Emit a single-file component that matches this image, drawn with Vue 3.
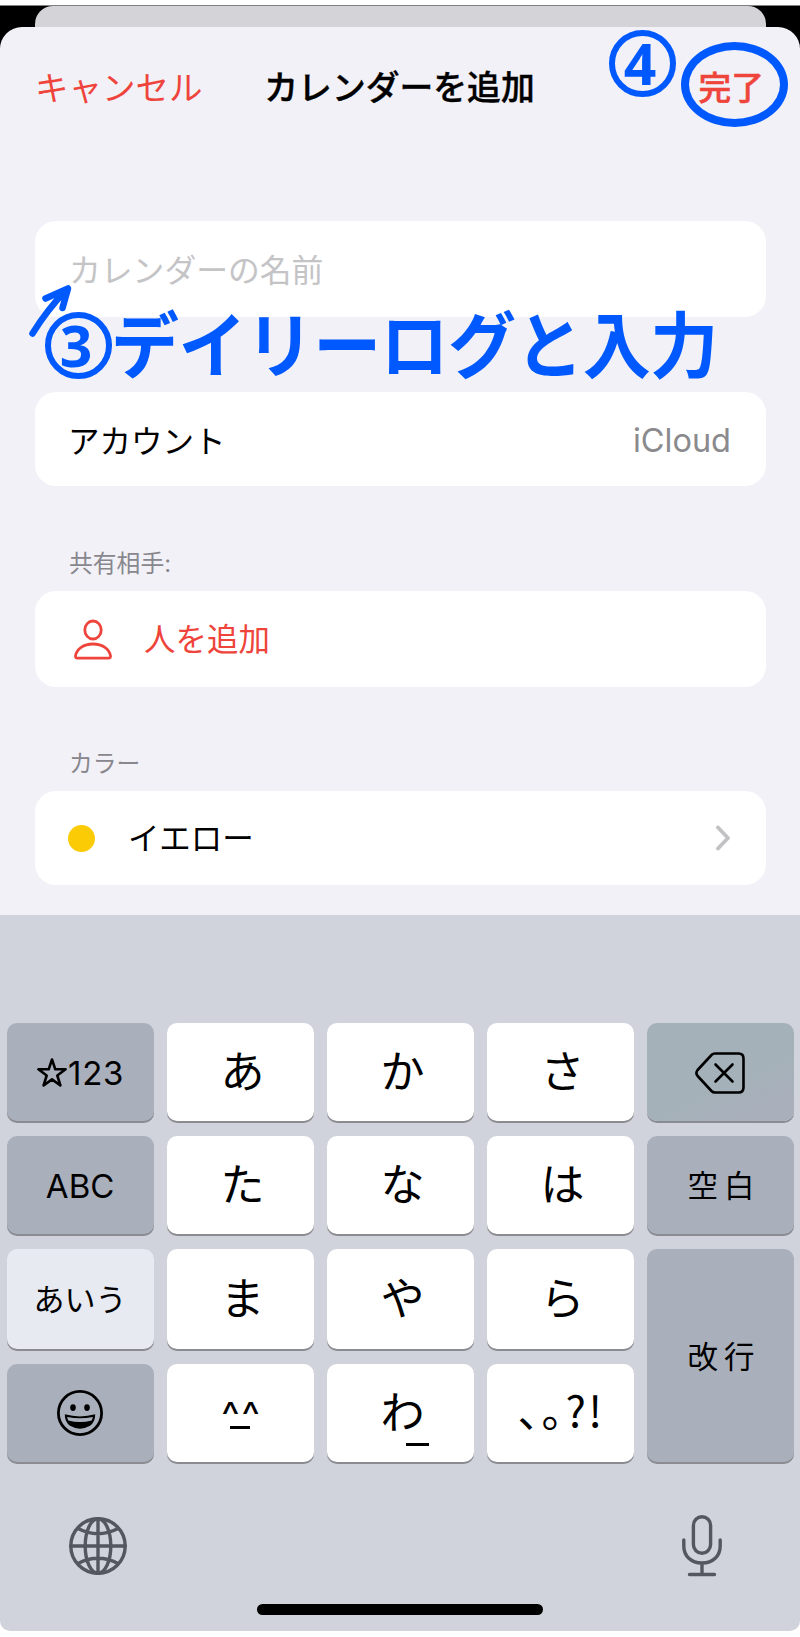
<template>
  <div class="screen">
    <div class="back-sheet"></div>

    <div class="sheet">
      <div class="nav">
        <button class="nav-btn">キャンセル</button>
        <h1>カレンダーを追加</h1>
        <button class="nav-btn done">完了</button>
      </div>

      <div class="form">
        <div class="card name-card">
          <input v-model="name" class="name-input" placeholder="カレンダーの名前">
        </div>

        <div class="card account-card">
          <span>アカウント</span>
          <span class="value">iCloud</span>
        </div>

        <div class="label">共有相手:</div>
        <div class="card share-card">
          <svg class="person" width="40" height="42" viewBox="0 0 40 42">
            <ellipse cx="20" cy="11" rx="8.2" ry="9" />
            <path d="M4.5 39.2h31c1.4 0 2.2-.9 2-2.3C36.4 30 29.5 25 20 25S3.6 30 2.5 36.9c-.2 1.4.6 2.3 2 2.3z" />
          </svg>
          <span class="red">人を追加</span>
        </div>

        <div class="label">カラー</div>
        <div class="card color-card">
          <span class="dot"></span>
          <span class="color-name">イエロー</span>
          <svg class="chevron" width="16" height="26" viewBox="0 0 16 26">
            <path d="M3 2.5L13 13L3 23.5" />
          </svg>
        </div>
      </div>

      <!-- подсказки поверх формы -->
      <div class="circle step4">4</div>
      <div class="ring"></div>
      <svg class="arrow" width="46" height="56" viewBox="0 0 46 56">
        <path d="M5.5 50.5Q20 27 40 6M18.5 15.5L41 5.500L35.5 25" />
      </svg>
      <div class="circle step3">3</div>
      <div class="note">デイリーログと入力</div>
    </div>

    <div class="keyboard">
      <div class="keys">
        <button
          v-for="key in keys"
          :key="key.id"
          :class="['key', key.type, key.id]"
        >
          <template v-if="key.id === 'num'">
            <svg width="32" height="32" viewBox="0 0 32 32" class="star">
              <path d="M16 2.5L19.3 12.3H29.6L21.3 18.5L24.4 28.5L16 22.4L7.6 28.5L10.7 18.5L2.4 12.3H12.7Z" />
            </svg>123
          </template>
          <svg v-else-if="key.id === 'del'" width="50" height="42" viewBox="0 0 50 42" class="line">
            <path d="M20 1.5H43.5Q48.5 1.5 48.5 6.5V35.5Q48.5 40.5 43.5 40.5H20Q18 40.5 16.5 39L2.6 24Q.2 21 2.6 18L16.5 3Q18 1.5 20 1.5Z" />
            <path d="M20.5 12.5L37.5 29.5M37.5 12.5L20.5 29.5" />
          </svg>
          <svg v-else-if="key.id === 'emoji'" width="48" height="48" viewBox="0 0 48 48">
            <circle cx="24" cy="24" r="21.6" fill="none" stroke="#000" stroke-width="2.8" />
            <ellipse cx="17" cy="18.6" rx="2.8" ry="3.4" />
            <ellipse cx="31" cy="18.6" rx="2.8" ry="3.4" />
            <path d="M8.8 25.3Q24 29.5 39.2 25.3Q39.2 33 34 36.8Q24 42.5 14 36.8Q8.8 33 8.8 25.3Z" />
            <path d="M11.2 27.9Q24 30.7 36.8 27.9Q36.5 30 35.7 31.5Q24 34.5 12.3 31.5Q11.5 30 11.2 27.9Z" fill="#a9afbb" />
          </svg>
          <template v-else-if="key.id === 'kao'">
            <span>^^</span><i class="bar"></i>
          </template>
          <template v-else-if="key.id === 'wa'">
            わ<i class="bar"></i>
          </template>
          <template v-else>{{ key.text }}</template>
        </button>
      </div>

      <div class="bottom">
        <svg class="globe" width="58" height="58" viewBox="0 0 58 58">
          <circle cx="29" cy="29" r="27.2" />
          <ellipse cx="29" cy="29" rx="12.8" ry="27.2" />
          <path d="M29 1.8V56.2M1.8 29H56.2M9 11.5Q29 22 49 11.5M9 46.5Q29 36 49 46.5" />
        </svg>
        <svg class="mic" width="42" height="62" viewBox="0 0 42 62">
          <rect x="12.4" y="1.8" width="17.2" height="36.4" rx="8.6" />
          <path d="M2.8 25V31C2.8 41 10 48 21 48S39.2 41 39.2 31V25M21 48V59.5M8.5 59.5H33.5" />
        </svg>
      </div>
      <div class="home"></div>
    </div>
  </div>
</template>

<script setup>
import { ref } from 'vue'

const name = ref('')

const keys = [
  { id: 'num', type: 'gray' },
  { id: 'a', type: 'kana', text: 'あ' },
  { id: 'ka', type: 'kana', text: 'か' },
  { id: 'sa', type: 'kana', text: 'さ' },
  { id: 'del', type: 'gray' },
  { id: 'abc', type: 'gray', text: 'ABC' },
  { id: 'ta', type: 'kana', text: 'た' },
  { id: 'na', type: 'kana', text: 'な' },
  { id: 'ha', type: 'kana', text: 'は' },
  { id: 'space', type: 'gray', text: '空白' },
  { id: 'aiu', type: 'light', text: 'あいう' },
  { id: 'ma', type: 'kana', text: 'ま' },
  { id: 'ya', type: 'kana', text: 'や' },
  { id: 'ra', type: 'kana', text: 'ら' },
  { id: 'enter', type: 'gray', text: '改行' },
  { id: 'emoji', type: 'gray' },
  { id: 'kao', type: 'kana' },
  { id: 'wa', type: 'kana' },
  { id: 'punct', type: 'kana', text: '、。?!' }
]
</script>

<style>
body {
  background: #fff;
}
</style>

<style scoped>
.screen {
  width: 800px;
  height: 1637px;
  padding-top: 6px;
  box-sizing: border-box;
  background: linear-gradient(#fff 5px, #000 6px, #000 80px, #fff 80px);
  font-family: Inter, "Noto Sans CJK JP", sans-serif;
  color: #000;
  overflow: hidden;
}

button {
  border: 0;
  padding: 0;
  background: none;
  font: inherit;
  color: inherit;
}

svg {
  display: block;
  flex: none;
}

.back-sheet {
  height: 21px;
  margin: 0 34px 0 35px;
  border-radius: 18px 18px 0 0;
  background: #d4d3d8;
}

.sheet {
  position: relative;
  height: 888px;
  border-radius: 22px 22px 0 0;
  background: #f2f1f7;
}

.nav {
  display: grid;
  grid-template-columns: 1fr auto 1fr;
  align-items: center;
  height: 120px;
  padding: 0 36px 4px 35px;
  box-sizing: border-box;
}

.nav-btn {
  justify-self: start;
  font-size: 33.5px;
  color: #ee443b;
}

.nav-btn.done {
  justify-self: end;
  font-size: 32.8px;
  font-weight: 500;
  -webkit-text-stroke: 0.5px #ee443b;
}

h1 {
  margin: 0;
  font-size: 33.8px;
  font-weight: 500;
  -webkit-text-stroke: 0.4px #000;
}

.form {
  padding: 74px 34px 0 35px;
}

.card {
  display: flex;
  align-items: center;
  height: 94px;
  padding: 0 35px 0 33px;
  box-sizing: border-box;
  border-radius: 21px;
  background: #fff;
  font-size: 31.5px;
}

.name-card,
.share-card {
  height: 96px;
}

.name-input {
  width: 100%;
  border: 0;
  padding: 2px 0 0 1px;
  outline: 0;
  background: none;
  font: inherit;
  font-size: 31.8px;
}

.name-input::placeholder {
  color: #c4c4c6;
}

.account-card {
  margin-top: 75px;
  justify-content: space-between;
}

.value {
  padding-top: 2px;
  font-size: 32.5px;
  color: #8a8a8d;
}

.label {
  display: flex;
  align-items: flex-end;
  height: 104.5px;
  padding: 0 0 12px 34px;
  box-sizing: border-box;
  font-size: 23.8px;
  color: #88878d;
}

.person {
  margin: 2px 15px 0 5px;
  fill: none;
  stroke: #ee443b;
  stroke-width: 2.8;
}

.red {
  margin-left: 16px;
  padding-bottom: 3px;
  color: #ee443b;
}

.dot {
  width: 27px;
  height: 27px;
  border-radius: 50%;
  background: #fbcb05;
}

.color-name {
  flex: 1;
  margin-left: 33px;
  padding-bottom: 4px;
}

.chevron {
  fill: none;
  stroke: #c2c2c5;
  stroke-width: 3.8;
  stroke-linecap: round;
  stroke-linejoin: round;
}

.circle {
  position: absolute;
  display: flex;
  align-items: center;
  justify-content: center;
  width: 67px;
  height: 67px;
  padding: 0 5px 2px 0;
  box-sizing: border-box;
  border: 6px solid #0059ff;
  border-radius: 50%;
  font-family: "Open Sans", "Noto Sans", sans-serif;
  font-size: 57px;
  font-weight: 700;
  line-height: 54px;
  color: #0059ff;
}

.step4 {
  left: 609px;
  top: 3px;
}

.step3 {
  left: 45px;
  top: 285px;
}

.ring {
  position: absolute;
  left: 681px;
  top: 15px;
  width: 107px;
  height: 85px;
  box-sizing: border-box;
  border: 8px solid #0059ff;
  border-radius: 50%;
}

.arrow {
  position: absolute;
  left: 27px;
  top: 256px;
  fill: none;
  stroke: #0059ff;
  stroke-width: 6.5;
  stroke-linecap: round;
  stroke-linejoin: round;
}

.note {
  position: absolute;
  left: 111px;
  top: 275px;
  font-family: "Noto Sans CJK JP", sans-serif;
  font-size: 68px;
  font-weight: 700;
  line-height: 80px;
  letter-spacing: -0.6px;
  white-space: nowrap;
  color: #0059ff;
  transform: scaleY(1.05);
}

.keyboard {
  height: 716px;
  padding: 108px 6.600px 0;
  box-sizing: border-box;
  border-radius: 0 0 10px 10px;
  background: #d0d3db;
}

.keys {
  display: grid;
  grid-template-columns: repeat(5, 147px);
  grid-template-rows: 98px 98px 100px 98px;
  gap: 15px 13px;
}

.key {
  display: flex;
  position: relative;
  align-items: center;
  justify-content: center;
  border-radius: 10px;
  background: #fff;
  box-shadow: 0 2px 0 #8b8c91;
  font-size: 44px;
}

.key.kana {
  padding: 0 0 6px 5px;
}

.key.gray {
  background: #a9afbb;
  font-size: 33px;
}

.key.num {
  padding-top: 2px;
  letter-spacing: 0.8px;
}

.key.abc {
  padding-top: 2px;
}

.key.light {
  padding-bottom: 4px;
  background: #e7eaf0;
  font-size: 31px;
}

.key.del {
  padding-top: 2px;
  background: linear-gradient(155deg, #a5b1b9 60%, #a9afbb 90%);
}

.key.space,
.key.enter {
  padding: 0 0 2px 2px;
  font-size: 30.5px;
  letter-spacing: 6px;
  text-indent: 6px;
}

.key.enter {
  grid-row: 3 / 5;
  grid-column: 5;
}

.star,
.line {
  fill: none;
  stroke: #000;
  stroke-width: 2.6;
  stroke-linecap: round;
  stroke-linejoin: round;
}

.key.kao {
  padding: 2px 0 0 3px;
  font-size: 39px;
  letter-spacing: 2px;
}

.bar {
  position: absolute;
  height: 3px;
  background: #000;
}

.kao .bar {
  left: 63px;
  top: 62px;
  width: 20px;
}

.wa .bar {
  left: 79px;
  top: 79px;
  width: 23px;
}

.key.punct {
  padding: 0 0 11px 2px;
  font-family: "Noto Sans CJK JP", sans-serif;
  font-feature-settings: "halt";
  font-size: 43px;
  letter-spacing: 2.5px;
}

.bottom {
  display: flex;
  justify-content: space-between;
  align-items: center;
  height: 62px;
  margin-top: 53px;
  padding: 0 70px 0 62px;
}

.globe,
.mic {
  fill: none;
  stroke: #54575f;
  stroke-width: 3.4;
  stroke-linecap: round;
}

.home {
  width: 286px;
  height: 11px;
  margin: 27px auto 0;
  border-radius: 6px;
  background: #000;
}
</style>
